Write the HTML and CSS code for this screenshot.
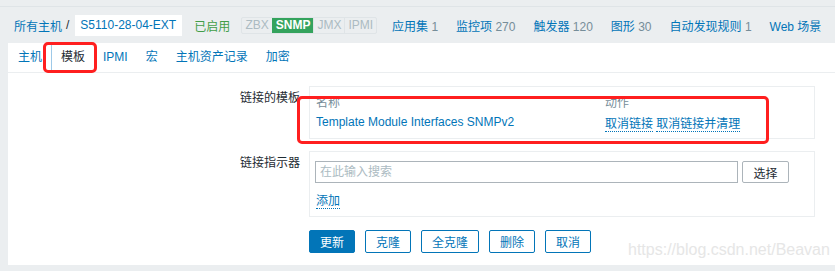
FILE: index.html
```html
<!DOCTYPE html>
<html lang="zh-CN">
<head>
  <meta charset="UTF-8">
  <meta name="viewport" content="width=device-width, initial-scale=1.0">
  <title>主机 - 模板</title>
  <link rel="stylesheet" href="styles.css">
</head>
<body>

<div class="topline"></div>

<div class="header">
  <a class="link">所有主机</a>
  <span class="sep">/</span>
  <span class="crumb">S5110-28-04-EXT</span>
  <span class="status">已启用</span>
  <span class="badges">
    <span class="badge">ZBX</span><span class="badge on">SNMP</span><span class="badge">JMX</span><span class="badge">IPMI</span>
  </span>
  <nav class="nav">
    <a class="link">应用集 <span class="count">1</span></a>
    <a class="link">监控项 <span class="count">270</span></a>
    <a class="link">触发器 <span class="count">120</span></a>
    <a class="link">图形 <span class="count">30</span></a>
    <a class="link">自动发现规则 <span class="count">1</span></a>
    <a class="link">Web 场景</a>
  </nav>
</div>

<div class="panel">
  <ul class="tabs">
    <li class="tab">主机</li>
    <li class="tab active">模板</li>
    <li class="tab">IPMI</li>
    <li class="tab">宏</li>
    <li class="tab">主机资产记录</li>
    <li class="tab">加密</li>
  </ul>

  <div class="form">
    <div class="row">
      <div class="label">链接的模板</div>
      <div class="box">
        <table class="list">
          <tr><th class="c-name">名称</th><th>动作</th></tr>
          <tr>
            <td class="c-name"><a class="link">Template Module Interfaces SNMPv2</a></td>
            <td><a class="link dotted">取消链接</a> <a class="link dotted">取消链接并清理</a></td>
          </tr>
        </table>
      </div>
    </div>

    <div class="row">
      <div class="label">链接指示器</div>
      <div class="box box-pad">
        <div class="search">
          <div class="input">在此输入搜索</div>
          <button class="btn-grey">选择</button>
        </div>
        <a class="link dotted add">添加</a>
      </div>
    </div>

    <div class="row row-buttons">
      <div></div>
      <div class="buttons">
        <button class="btn main">更新</button>
        <button class="btn">克隆</button>
        <button class="btn">全克隆</button>
        <button class="btn">删除</button>
        <button class="btn">取消</button>
      </div>
    </div>
  </div>
</div>

<div class="mark mark-tab"></div>
<div class="mark mark-table"></div>
<div class="watermark">https://blog.csdn.net/Beavan</div>

</body>
</html>
```

FILE: styles.css
```css
body { margin:0; font-family: "Liberation Sans", Arial, "Noto Sans CJK SC", sans-serif; font-size:12px; background:#ebeef0; color:#1f2c33; position:relative; }
.link { color:#0275b8; text-decoration:none; }
.topline { height:6px; border-bottom:1px solid #dfe4e7; }

.header { display:flex; align-items:center; height:36px; padding-left:14px; white-space:nowrap; }
.sep { margin:0 6px 0 4px; color:#1f2c33; }
.crumb { background:#fff; color:#0275b8; padding:0 5px; height:21px; line-height:21px; width:97px; }
.status { color:#429e47; margin-left:12px; }
.badges { display:flex; margin-left:11px; border:1px solid #dfe4e7; border-radius:2px; }
.badge { padding:0 3px; height:15px; line-height:15px; color:#acbbc2; border-left:1px solid #dfe4e7; }
.badge:first-child { border-left:none; }
.badge.on { background:#34a35d; color:#fff; font-weight:bold; border-color:#34a35d; }
.nav { display:flex; gap:18px; margin-left:15px; }
.count { color:#768d99; }

.panel { background:#fff; margin-left:8px; height:222px; }
.tabs { display:flex; list-style:none; margin:0; padding:0 0 0 1px; height:29px; border-bottom:1px solid #ebeef0; }
.tab { padding:0 9px; line-height:29px; color:#0275b8; }
.tab.active { color:#1f2c33; border-left:1px solid #9ec9e8; }

.form { padding-top:13px; display:flex; flex-direction:column; gap:12px; }
.row { display:grid; grid-template-columns:292px 506px; column-gap:9px; }
.row-buttons { margin-top:1px; }
.label { text-align:right; padding-top:2px; }
.box { border:1px solid #ebeef0; }
.list { border-collapse:collapse; margin:6px 0 4px 6px; }
.list th { text-align:left; font-weight:normal; color:#768d99; height:16px; padding:0; }
.list td { height:24px; padding:0; }
.c-name { width:289px; }
.dotted { border-bottom:1px dotted #0275b8; }
.box-pad { padding:9px 0 7px 5px; }
.search { display:flex; gap:4px; }
.input { width:413px; height:20px; line-height:20px; border:1px solid #acb4ba; padding:0 4px; color:#acbbc2; }
.btn-grey { font:inherit; height:22px; width:47px; padding:0; background:#fff; border:1px solid #acb4ba; border-radius:2px; color:#1f2c33; }
.add { display:inline-block; margin:11px 0 0 1px; line-height:14px; }

.buttons { display:flex; gap:10px; }
.btn { font:inherit; height:23px; padding:0 10px; background:#fff; border:1px solid #0275b8; border-radius:2px; color:#0275b8; }
.btn.main { background:#0275b8; color:#fff; }

.mark { position:absolute; border:3px solid #ff1f1f; border-radius:5px; box-sizing:border-box; }
.mark-tab { left:43px; top:42px; width:54px; height:31px; }
.mark-table { left:297px; top:96px; width:472px; height:48px; }
.watermark { position:absolute; left:628px; top:241px; font-size:16px; color:#e6e6e6; }
```
